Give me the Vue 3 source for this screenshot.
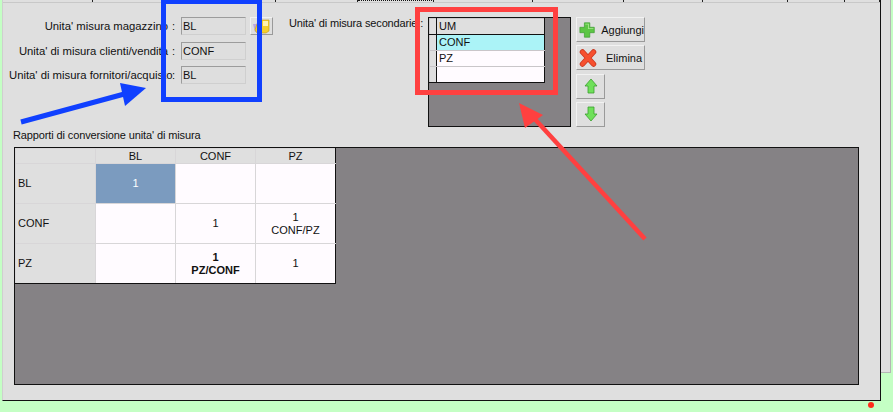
<script setup>
const tabs = [90, 183, 82, 76, 99, 91, 79, 85, 57, 35]

const campi = [
  { etichetta: "Unita' misura magazzino", valore: 'BL', sfoglia: true },
  { etichetta: "Unita' di misura clienti/vendita", valore: 'CONF' },
  { etichetta: "Unita' di misura fornitori/acquisto", valore: 'BL' },
]

const secondarie = [
  { um: 'CONF', attiva: true },
  { um: 'PZ' },
  { um: '' },
]

const colonne = ['BL', 'CONF', 'PZ']
const righe = [
  { nome: 'BL', celle: [{ v: '1', sel: true }, {}, {}] },
  { nome: 'CONF', celle: [{}, { v: '1' }, { v: '1', u: 'CONF/PZ' }] },
  { nome: 'PZ', celle: [{}, { v: '1', u: 'PZ/CONF', bold: true }, { v: '1' }] },
]
</script>

<template>
  <div class="pagina">
    <div class="scheda">
      <div class="linguette">
        <div
          v-for="(w, i) in tabs"
          :key="i"
          class="linguetta"
          :class="{ puntini: i === 3 }"
          :style="{ width: w + 'px' }"
        ></div>
      </div>

      <div class="corpo">
        <div class="alto">
          <div class="campi">
            <div v-for="c in campi" :key="c.etichetta" class="campo">
              <label class="etichetta">{{ c.etichetta }}</label>
              <span class="due">:</span>
              <div class="valore">{{ c.valore }}</div>
              <button v-if="c.sfoglia" class="sfoglia">
                <svg width="20" height="16" viewBox="0 0 20 16">
                  <path d="M1 6h3l2-2 3 2v8H3z" fill="#b9a8e0" />
                  <path d="M8 2h9v11l-3 2H5l-2-3 2-6h3z" fill="#f5cf2e" stroke="#c59a10" stroke-width=".6" />
                  <path d="M11 3h5v5h-5z" fill="#fff3b0" />
                </svg>
              </button>
            </div>
          </div>

          <div class="secondarie">
            <span class="titolo-sec">Unita' di misura secondarie :</span>
            <div class="griglia-sec">
              <table class="tab-sec">
                <tbody>
                  <tr class="testa">
                    <td class="ind"></td>
                    <td>UM</td>
                  </tr>
                  <tr v-for="(r, i) in secondarie" :key="i" :class="{ attiva: r.attiva }">
                    <td class="ind"></td>
                    <td class="um">{{ r.um }}</td>
                  </tr>
                </tbody>
              </table>
            </div>
            <div class="azioni">
              <button class="btn largo">
                <svg width="18" height="18" viewBox="0 0 18 18">
                  <path d="M6 1h6v5h5v6h-5v5H6v-5H1V6h5z" fill="#5cc644" stroke="#3f9e33" stroke-width=".8" />
                  <path d="M7 2h4v5h5v1H10V3H7z" fill="#a6e88e" />
                </svg>
                <span class="btn-testo">Aggiungi</span>
              </button>
              <button class="btn largo">
                <svg width="18" height="18" viewBox="0 0 18 18">
                  <path d="M3.500 3l11 12M14.500 3l-11 12" stroke="#c9371f" stroke-width="5.500" stroke-linecap="round" fill="none" />
                  <path d="M3.500 3l11 12M14.500 3l-11 12" stroke="#f6502f" stroke-width="4" stroke-linecap="round" fill="none" />
                </svg>
                <span class="btn-testo el">Elimina</span>
              </button>
              <button class="btn stretto">
                <svg width="14" height="16" viewBox="0 0 14 16">
                  <path d="M7 1l6 7H10v7H4V8H1z" fill="#6fe05a" stroke="#3aa02e" stroke-width=".8" />
                </svg>
              </button>
              <button class="btn stretto">
                <svg width="14" height="16" viewBox="0 0 14 16">
                  <path d="M4 1h6v7h3l-6 7-6-7h3z" fill="#6fe05a" stroke="#3aa02e" stroke-width=".8" />
                </svg>
              </button>
            </div>
          </div>
        </div>

        <div class="didascalia">Rapporti di conversione unita' di misura</div>

        <div class="griglia">
          <table class="matrice">
            <thead>
              <tr>
                <th class="angolo"></th>
                <th v-for="c in colonne" :key="c">{{ c }}</th>
              </tr>
            </thead>
            <tbody>
              <tr v-for="r in righe" :key="r.nome">
                <th class="riga">{{ r.nome }}</th>
                <td
                  v-for="(cella, j) in r.celle"
                  :key="j"
                  :class="{ sel: cella.sel, forte: cella.bold }"
                >
                  {{ cella.v }}<template v-if="cella.u"><br />{{ cella.u }}</template>
                </td>
              </tr>
            </tbody>
          </table>
        </div>
      </div>
    </div>
    <div class="bordo-destro"></div>

    <!-- annotazioni sopra lo screenshot -->
    <svg class="note" width="893" height="412" viewBox="0 0 893 412">
      <rect x="163.500" y="1.500" width="96" height="98" fill="none" stroke="#1040ff" stroke-width="5" />
      <path d="M21 122L128 93" stroke="#1040ff" stroke-width="5" fill="none" />
      <path d="M146 88L120 83L125 106z" fill="#1040ff" />
      <rect x="417.500" y="9.500" width="138" height="83" fill="none" stroke="#ff4040" stroke-width="5" />
      <path d="M645 239L532 116" stroke="#ff4040" stroke-width="4.500" fill="none" />
      <path d="M519 103L525 128L543 115z" fill="#ff4040" />
      <circle cx="871" cy="405" r="3" fill="#ff2a1a" />
    </svg>
  </div>
</template>

<style scoped>
.pagina {
  position: relative;
  display: flex;
  align-items: flex-start;
  width: 893px;
  height: 412px;
  padding-left: 2px;
  box-sizing: border-box;
  overflow: hidden;
  background: #c4ffc4;
  font-family: 'Liberation Sans', Arial, sans-serif;
  font-size: 11px;
  color: #111;
}

.scheda {
  width: 879px;
  height: 401px;
  box-sizing: border-box;
  background: #dfdfdf;
  border-right: 1px solid #111;
  border-bottom: 1px solid #111;
  border-left: 1px solid #cfcfcf;
}

.bordo-destro {
  width: 10px;
  height: 373px;
  background: #dfdfdf;
  border-right: 1px solid #b5b5b5;
  border-bottom: 1px solid #b5b5b5;
  box-sizing: border-box;
}

.linguette {
  display: flex;
  height: 3px;
  border-bottom: 1px solid #c8c8c8;
  box-sizing: border-box;
}

.linguetta {
  box-sizing: border-box;
  border-right: 1px solid #222;
}

.puntini {
  border-top: 1px dotted #111;
}

.corpo {
  padding: 14px 0 0 11px;
}

.alto {
  display: flex;
  height: 110px;
}

.campi {
  display: flex;
  flex-direction: column;
  gap: 6.500px;
  width: 275px;
}

.campo {
  display: flex;
  align-items: center;
  height: 18px;
}

.etichetta {
  flex: none;
  width: 159px;
  margin-left: -5px;
  font-size: 11.300px;
  text-align: right;
  white-space: nowrap;
}

.due {
  flex: none;
  width: 13px;
  padding-left: 4px;
  box-sizing: border-box;
}

.valore {
  width: 65px;
  height: 18px;
  line-height: 16px;
  box-sizing: border-box;
  padding-left: 1px;
  border: 1px solid;
  border-color: #9c9c9c #cfcfcf #cfcfcf #9c9c9c;
  background: #dedede;
}

.sfoglia,
.btn {
  display: flex;
  align-items: center;
  padding: 0;
  margin: 0;
  box-sizing: border-box;
  font: inherit;
  color: inherit;
  background: #dfdfdf;
  border: 1px solid;
  border-color: #f2f2f2 #9a9a9a #9a9a9a #f2f2f2;
}

.sfoglia {
  width: 23px;
  height: 18px;
  margin-left: 4px;
  justify-content: center;
}

.secondarie {
  display: flex;
  align-items: flex-start;
}

.titolo-sec {
  width: 139px;
  letter-spacing: -0.15px;
  white-space: nowrap;
}

.griglia-sec {
  width: 143px;
  height: 110px;
  box-sizing: border-box;
  background: #858285;
  border: 1px solid #111;
}

.tab-sec {
  width: 116px;
  border-collapse: collapse;
  table-layout: fixed;
  background: #fffbff;
}

.tab-sec td {
  height: 15px;
  padding: 0 0 0 2px;
  border: 1px solid #c9c6c9;
  line-height: 15px;
}

.tab-sec .ind {
  width: 4px;
  background: #dfdfdf;
  border-right: 1px solid #111;
}

.tab-sec .testa td {
  background: #dfdfdf;
  border-bottom: 1px solid #111;
}

.tab-sec .attiva .um {
  background: #abf3f7;
}

.tab-sec tr:last-child td {
  border-bottom: 1px solid #111;
}

.tab-sec td:last-child {
  border-right: 1px solid #111;
}

.azioni {
  display: flex;
  flex-direction: column;
  align-items: flex-start;
  gap: 3.330px;
  margin-left: 5px;
}

.largo {
  width: 69px;
  height: 25px;
  padding-left: 2px;
}

.btn-testo {
  margin-left: 6px;
}

.btn-testo.el {
  margin-left: 9px;
}

.stretto {
  width: 29px;
  height: 25px;
  justify-content: center;
}

.didascalia {
  height: 22px;
  margin: -2px 0 0 -1px;
  letter-spacing: -0.12px;
  line-height: 20px;
}

.griglia {
  width: 845px;
  height: 238px;
  box-sizing: border-box;
  background: #858285;
  border: 1px solid #111;
}

.matrice {
  border-collapse: collapse;
  table-layout: fixed;
  width: 321px;
  background: #fffbff;
}

.matrice th,
.matrice td {
  padding: 0;
  border: 1px solid #d8d6d8;
  font-weight: normal;
  text-align: center;
  line-height: 13px;
}

.matrice thead th {
  width: 79px;
  height: 14px;
  background: #dfdfdf;
}

.matrice .riga {
  height: 39px;
  padding-left: 2px;
  background: #dfdfdf;
  text-align: left;
}

.matrice tr > :last-child {
  border-right: 1px solid #111;
}

.matrice tbody tr:last-child > * {
  border-bottom: 1px solid #111;
}

.matrice .sel {
  background: #7b9bbf;
  color: #fff;
}

.matrice .forte {
  font-weight: bold;
}

.note {
  position: absolute;
  top: 0;
  left: 0;
  pointer-events: none;
}
</style>
